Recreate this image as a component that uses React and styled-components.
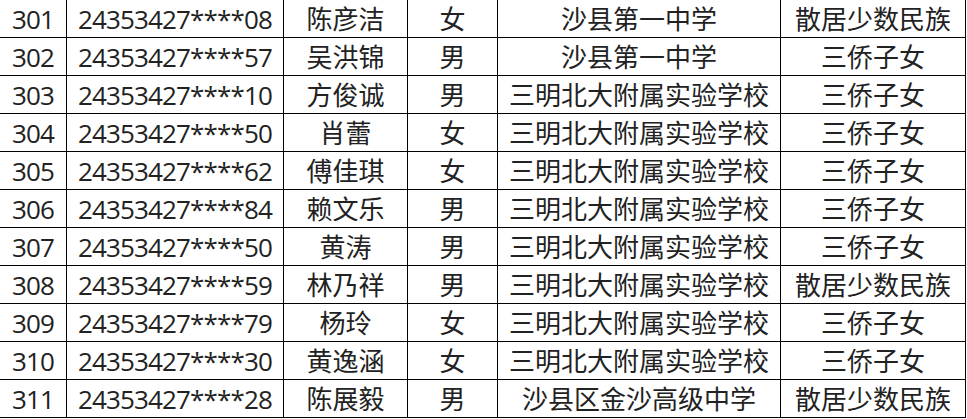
import React from 'react';
import styled, { createGlobalStyle } from 'styled-components';

const GlobalStyle = createGlobalStyle`
  html, body {
    margin: 0;
    padding: 0;
    background: #fff;
  }
`;

const COLUMNS = [67, 217, 124, 90, 283, 185];

const rows = [
  ['301', '24353427****08', '陈彦洁', '女', '沙县第一中学', '散居少数民族'],
  ['302', '24353427****57', '吴洪锦', '男', '沙县第一中学', '三侨子女'],
  ['303', '24353427****10', '方俊诚', '男', '三明北大附属实验学校', '三侨子女'],
  ['304', '24353427****50', '肖蕾', '女', '三明北大附属实验学校', '三侨子女'],
  ['305', '24353427****62', '傅佳琪', '女', '三明北大附属实验学校', '三侨子女'],
  ['306', '24353427****84', '赖文乐', '男', '三明北大附属实验学校', '三侨子女'],
  ['307', '24353427****50', '黄涛', '男', '三明北大附属实验学校', '三侨子女'],
  ['308', '24353427****59', '林乃祥', '男', '三明北大附属实验学校', '散居少数民族'],
  ['309', '24353427****79', '杨玲', '女', '三明北大附属实验学校', '三侨子女'],
  ['310', '24353427****30', '黄逸涵', '女', '三明北大附属实验学校', '三侨子女'],
  ['311', '24353427****28', '陈展毅', '男', '沙县区金沙高级中学', '散居少数民族'],
];

export default function App() {
  return (
    <>
      <GlobalStyle />
      <Table>
        {rows.map((row) =>
          row.map((value, i) => (
            <Cell key={`${row[0]}-${i}`} $numeric={i < 2}>
              {value}
            </Cell>
          ))
        )}
      </Table>
    </>
  );
}

const Table = styled.div`
  display: grid;
  grid-template-columns: ${COLUMNS.map((w) => `${w}px`).join(' ')};
  grid-auto-rows: 38px;
  width: 967px;
  font-family: 'Open Sans', 'Noto Sans CJK SC', sans-serif;
  font-size: 26px;
  color: #222;
`;

const Cell = styled.div`
  box-sizing: border-box;
  display: flex;
  align-items: center;
  justify-content: center;
  border-right: 1px solid #000;
  border-bottom: 1px solid #000;
  white-space: nowrap;
  overflow: hidden;
  line-height: 1;
  padding-top: 1px;
  letter-spacing: ${(p) => (p.$numeric ? '-0.85px' : '0')};
`;
